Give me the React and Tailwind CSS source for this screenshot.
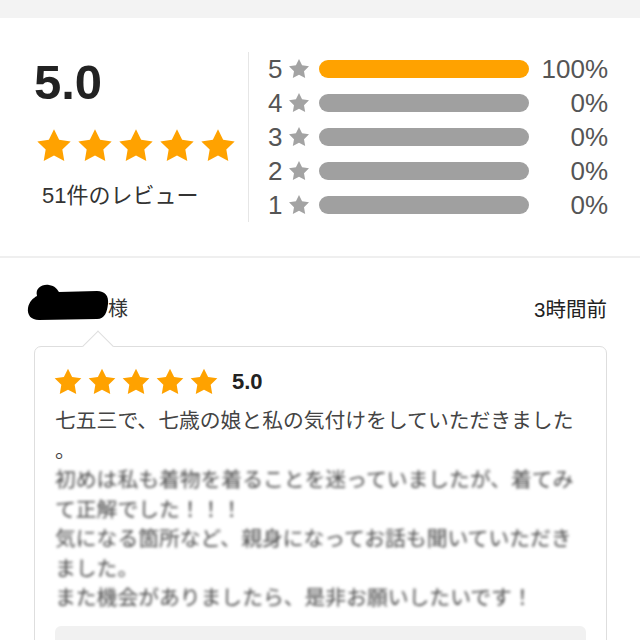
const STAR = "M12 2l3.09 6.26L22 9.27l-5 4.87 1.18 6.88L12 17.77l-6.18 3.25L7 14.14 2 9.27l6.91-1.01L12 2z";

function Star({ size, color }) {
  return (
    <svg width={size} height={size} viewBox="0 0 24 24" className="shrink-0">
      <path d={STAR} fill={color} />
    </svg>
  );
}

const rows = [
  { n: 5, pct: "100%", full: true },
  { n: 4, pct: "0%" },
  { n: 3, pct: "0%" },
  { n: 2, pct: "0%" },
  { n: 1, pct: "0%" },
];

const blurred = [
  "初めは私も着物を着ることを迷っていましたが、着てみ",
  "て正解でした！！！",
  "気になる箇所など、親身になってお話も聞いていただき",
  "ました。",
  "また機会がありましたら、是非お願いしたいです！",
];

export default function App() {
  return (
    <div
      className="w-[640px] h-[640px] overflow-hidden bg-white text-[#333]"
      style={{ fontFamily: '"Liberation Sans", "Noto Sans CJK JP", sans-serif' }}
    >
      {/* top band */}
      <div className="h-[18px] bg-[#f3f3f3]" />

      {/* summary */}
      <div className="flex py-[34px] border-b-2 border-[#efefef]">
        <div className="w-[248px] pl-[34px] flex flex-col">
          <div className="mt-[6px] text-[49px] leading-[48px] font-bold text-[#222]">5.0</div>
          <div className="mt-[20px] flex gap-[1px]">
            {[0, 1, 2, 3, 4].map((i) => (
              <Star key={i} size={40} color="#ffa200" />
            ))}
          </div>
          <div className="mt-[16px] pl-[8px] text-[22px] leading-[28px] text-[#333]">51件のレビュー</div>
        </div>
        <div className="w-px bg-[#e6e6e6]" />
        <div className="flex-1 pl-[19px] pr-[32px] flex flex-col">
          {rows.map((r) => (
            <div key={r.n} className="h-[34px] flex items-center">
              <span className="w-[19px] text-[26px] leading-none text-[#555]">{r.n}</span>
              <Star size={24} color="#a3a3a3" />
              <div
                className={`ml-[8px] w-[210px] h-[18px] rounded-full ${
                  r.full ? "bg-[#ffa200]" : "bg-[#a0a0a0]"
                }`}
              />
              <span className="flex-1 text-right text-[26px] leading-none text-[#555]">{r.pct}</span>
            </div>
          ))}
        </div>
      </div>

      {/* review */}
      <div className="pt-[26px] pl-[27px] pr-[33px] flex items-end justify-between">
        <div className="flex items-end">
          <svg width="82" height="38" viewBox="0 0 82 38">
            <path
              d="M10 12 C8 4 15 0 22 1 C28 2 30 5 32 8 L70 7 C78 7 82 12 81 20 C80 28 78 35 70 35 L12 36 C4 36 0 31 1 24 C2 18 6 14 10 12 Z"
              fill="#000"
            />
          </svg>
          <span className="text-[20px] leading-[26px] -ml-[1px] text-[#333]">様</span>
        </div>
        <span className="text-[20.5px] leading-[24px] text-[#222]">3時間前</span>
      </div>

      <div className="relative mt-[24px] ml-[34px] mr-[33px] border border-[#dedede] rounded-[7px] px-[20px] pt-[18px] pb-[20px]">
        <div className="absolute -top-[12px] left-[52px] w-[22px] h-[22px] rotate-45 bg-white border-t border-l border-[#dedede]" />
        <div className="relative flex items-center -ml-[3px]">
          <div className="flex gap-[2px]">
            {[0, 1, 2, 3, 4].map((i) => (
              <Star key={i} size={32} color="#ffa200" />
            ))}
          </div>
          <span className="ml-[12px] text-[22px] font-bold text-[#222]">5.0</span>
        </div>
        <div className="mt-[8px] text-[20.8px] leading-[29.5px] text-[#444] whitespace-nowrap">
          <div>七五三で、七歳の娘と私の気付けをしていただきました</div>
          <div>。</div>
          <div className="blur-[1.4px] text-[#4a4a4a]">
            {blurred.map((l, i) => (
              <div key={i}>{l}</div>
            ))}
          </div>
        </div>
        <div className="mt-[13px] h-[40px] rounded-[6px] bg-[#f1f1f1]" />
      </div>
    </div>
  );
}
